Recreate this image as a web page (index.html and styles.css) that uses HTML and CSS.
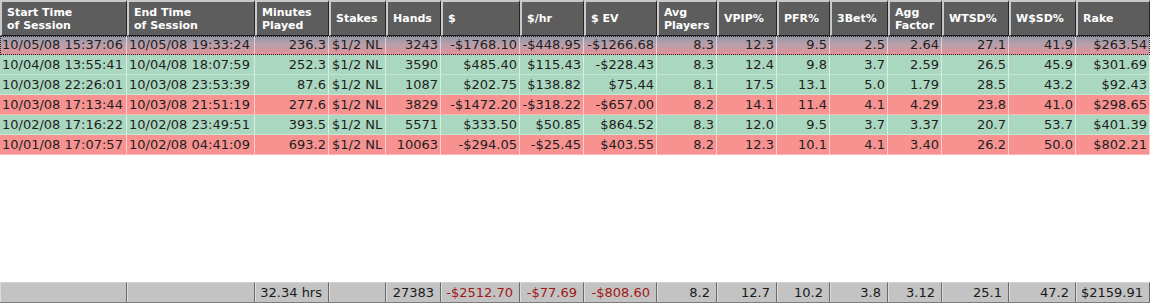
FILE: index.html
```html
<!DOCTYPE html>
<html>
<head>
<meta charset="utf-8">
<link rel="stylesheet" href="styles.css">
</head>
<body>
<div class="grid-view">
  <div class="row head">
    <div class="th">Start Time<br>of Session</div>
    <div class="th">End Time<br>of Session</div>
    <div class="th">Minutes<br>Played</div>
    <div class="th">Stakes</div>
    <div class="th">Hands</div>
    <div class="th">$</div>
    <div class="th">$/hr</div>
    <div class="th">$ EV</div>
    <div class="th">Avg<br>Players</div>
    <div class="th">VPIP%</div>
    <div class="th">PFR%</div>
    <div class="th">3Bet%</div>
    <div class="th">Agg<br>Factor</div>
    <div class="th">WTSD%</div>
    <div class="th">W$SD%</div>
    <div class="th">Rake</div>
  </div>

  <div class="row tr selected">
    <div class="td l">10/05/08 15:37:06</div><div class="td l">10/05/08 19:33:24</div><div class="td">236.3</div><div class="td s">$1/2 NL</div><div class="td">3243</div><div class="td">-$1768.10</div><div class="td">-$448.95</div><div class="td">-$1266.68</div><div class="td">8.3</div><div class="td">12.3</div><div class="td">9.5</div><div class="td">2.5</div><div class="td">2.64</div><div class="td">27.1</div><div class="td">41.9</div><div class="td">$263.54</div>
  </div>
  <div class="row tr win">
    <div class="td l">10/04/08 13:55:41</div><div class="td l">10/04/08 18:07:59</div><div class="td">252.3</div><div class="td s">$1/2 NL</div><div class="td">3590</div><div class="td">$485.40</div><div class="td">$115.43</div><div class="td">-$228.43</div><div class="td">8.3</div><div class="td">12.4</div><div class="td">9.8</div><div class="td">3.7</div><div class="td">2.59</div><div class="td">26.5</div><div class="td">45.9</div><div class="td">$301.69</div>
  </div>
  <div class="row tr win">
    <div class="td l">10/03/08 22:26:01</div><div class="td l">10/03/08 23:53:39</div><div class="td">87.6</div><div class="td s">$1/2 NL</div><div class="td">1087</div><div class="td">$202.75</div><div class="td">$138.82</div><div class="td">$75.44</div><div class="td">8.1</div><div class="td">17.5</div><div class="td">13.1</div><div class="td">5.0</div><div class="td">1.79</div><div class="td">28.5</div><div class="td">43.2</div><div class="td">$92.43</div>
  </div>
  <div class="row tr loss">
    <div class="td l">10/03/08 17:13:44</div><div class="td l">10/03/08 21:51:19</div><div class="td">277.6</div><div class="td s">$1/2 NL</div><div class="td">3829</div><div class="td">-$1472.20</div><div class="td">-$318.22</div><div class="td">-$657.00</div><div class="td">8.2</div><div class="td">14.1</div><div class="td">11.4</div><div class="td">4.1</div><div class="td">4.29</div><div class="td">23.8</div><div class="td">41.0</div><div class="td">$298.65</div>
  </div>
  <div class="row tr win">
    <div class="td l">10/02/08 17:16:22</div><div class="td l">10/02/08 23:49:51</div><div class="td">393.5</div><div class="td s">$1/2 NL</div><div class="td">5571</div><div class="td">$333.50</div><div class="td">$50.85</div><div class="td">$864.52</div><div class="td">8.3</div><div class="td">12.0</div><div class="td">9.5</div><div class="td">3.7</div><div class="td">3.37</div><div class="td">20.7</div><div class="td">53.7</div><div class="td">$401.39</div>
  </div>
  <div class="row tr loss">
    <div class="td l">10/01/08 17:07:57</div><div class="td l">10/02/08 04:41:09</div><div class="td">693.2</div><div class="td s">$1/2 NL</div><div class="td">10063</div><div class="td">-$294.05</div><div class="td">-$25.45</div><div class="td">$403.55</div><div class="td">8.2</div><div class="td">12.3</div><div class="td">10.1</div><div class="td">4.1</div><div class="td">3.40</div><div class="td">26.2</div><div class="td">50.0</div><div class="td">$802.21</div>
  </div>

  <div class="spacer"></div>

  <div class="row foot">
    <div class="tf"></div><div class="tf"></div><div class="tf">32.34 hrs</div><div class="tf"></div><div class="tf">27383</div><div class="tf neg">-$2512.70</div><div class="tf neg">-$77.69</div><div class="tf neg">-$808.60</div><div class="tf">8.2</div><div class="tf">12.7</div><div class="tf">10.2</div><div class="tf">3.8</div><div class="tf">3.12</div><div class="tf">25.1</div><div class="tf">47.2</div><div class="tf">$2159.91</div>
  </div>
</div>
</body>
</html>
```

FILE: styles.css
```css
html, body {
  margin: 0;
  padding: 0;
  background: #ffffff;
}

.grid-view {
  width: 1150px;
  height: 303px;
  display: flex;
  flex-direction: column;
  font-family: "DejaVu Sans", Verdana, sans-serif;
  overflow: hidden;
}

.row {
  display: grid;
  grid-template-columns: 127px 128px 74px 57px 55px 79px 64px 73px 60px 60px 53px 58px 54px 67px 67px 74px;
}

/* header */
.head {
  height: 36px;
  background: #c6c6c6;
}

.th {
  box-sizing: border-box;
  display: flex;
  align-items: center;
  height: 36px;
  padding: 0 3px 0 5px;
  border-top: 2px solid #c9c9c9;
  border-left: 2px solid #c9c9c9;
  border-right: 1px solid #262626;
  border-bottom: 1px solid #1c1c1c;
  background: #5d5d5d;
  color: #ffffff;
  font-weight: bold;
  font-size: 11px;
  line-height: 13px;
  white-space: nowrap;
  overflow: hidden;
}

/* body rows */
.tr {
  height: 20px;
  color: #1e1e1e;
  font-size: 13px;
  line-height: 19px;
  box-sizing: border-box;
  border-bottom: 1px solid rgba(255, 255, 255, 0.35);
}

.td {
  box-sizing: border-box;
  padding: 0 2px 0 2px;
  text-align: right;
  white-space: nowrap;
  overflow: hidden;
  border-right: 1px solid rgba(255, 255, 255, 0.55);
}

.td.l {
  text-align: left;
}

.td.s {
  text-align: left;
  padding-left: 3px;
}

.win {
  background: #aad7c0;
}

.loss {
  background: #f79291;
}

.selected {
  height: 19px;
  line-height: 17px;
  background: linear-gradient(#9597a8 0%, #b8a0aa 45%, #e6909a 100%);
  outline: 1px dotted #222222;
  outline-offset: -1px;
  border-bottom: none;
}

.spacer {
  flex: 1;
}

/* footer */
.foot {
  height: 21px;
  background: #c4c4c4;
  border-bottom: 1px solid #7c7c7c;
  box-sizing: border-box;
}

.tf {
  box-sizing: border-box;
  height: 20px;
  padding: 0 6px 0 4px;
  text-align: right;
  font-size: 13px;
  line-height: 20px;
  color: #1a1a1a;
  background: #c3c3c3;
  border-left: 1px solid #dcdcdc;
  border-top: 1px solid #d4d4d4;
  border-right: 1px solid #6a6a6a;
  white-space: nowrap;
  overflow: hidden;
}

.tf.neg {
  color: #a01818;
}
```
